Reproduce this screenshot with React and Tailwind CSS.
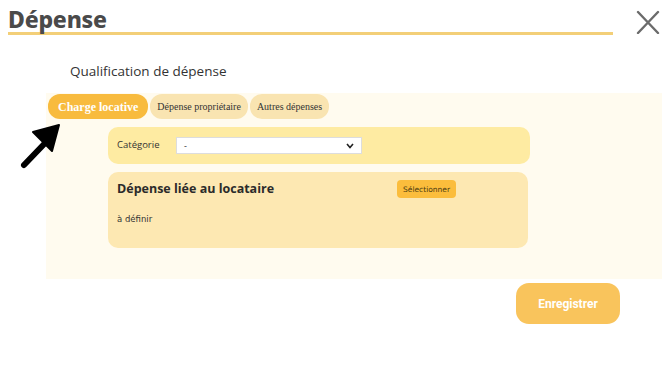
import React from 'react';

const Tab = ({ children, active = false }) => (
  <div
    className={`h-[25px] flex items-center rounded-[12px] ${
      active ? 'px-[10px] bg-[#f8bb3e] text-white font-bold text-[12px]' : 'px-[7px] bg-[#f9e4b1] text-[#333] text-[10px]'
    }`}
    style={{ fontFamily: '"Liberation Serif", serif' }}
  >
    {children}
  </div>
);

const App = () => {
  return (
    <div className="w-[670px] h-[365px] bg-white relative overflow-hidden" style={{ fontFamily: '"Open Sans", sans-serif' }}>
      {/* header */}
      <div className="flex items-start pl-2 pt-[6px]">
        <div className="w-[605px]">
          <h1 className="text-[23px] font-extrabold text-[#4a4a4a] leading-[26px] tracking-[-0.2px]" style={{ fontFamily: '"Noto Sans", sans-serif' }}>
            Dépense
          </h1>
          <div className="h-[3px] bg-[#f3cf78]" />
        </div>
        <svg className="ml-[23px] mt-[4px]" width="24" height="24" viewBox="0 0 24 24">
          <path d="M2 2 L22 23 M22 2 L2 23" stroke="#6b6b6b" strokeWidth="2.4" strokeLinecap="round" />
        </svg>
      </div>

      <p className="ml-[70px] mt-[28px] text-[13.5px] text-[#333] leading-[16px]" style={{ fontFamily: '"Open Sans", sans-serif' }}>
        Qualification de dépense
      </p>

      {/* panel */}
      <div className="ml-[46px] mt-[14px] w-[616px] h-[186px] bg-[#fffbef] pt-[1px]">
        <div className="flex gap-[2px] ml-[2px]">
          <Tab active>Charge locative</Tab>
          <Tab>Dépense propriétaire</Tab>
          <Tab>Autres dépenses</Tab>
        </div>

        <div className="ml-[62px] mt-[8px] w-[422px] h-[37px] rounded-[10px] bg-[#feeba2] flex items-center px-[9px]">
          <span className="text-[9.5px] text-[#333] w-[59px]" style={{ fontFamily: '"Open Sans", sans-serif' }}>Catégorie</span>
          <div className="w-[186px] h-[17px] bg-white border border-[#ddd] flex items-center justify-between px-[7px]">
            <span className="text-[9px] text-[#333]">-</span>
            <svg width="8" height="6" viewBox="0 0 8 6">
              <path d="M1 1 L4 4.5 L7 1" stroke="#222" strokeWidth="1.6" fill="none" />
            </svg>
          </div>
        </div>

        <div className="ml-[62px] mt-[8px] w-[420px] h-[76px] rounded-[10px] bg-[#fde8b2] px-[9px] pt-[8px]">
          <div className="flex items-center">
            <span className="text-[12.5px] font-bold text-[#2b2b2b] w-[280px]" style={{ fontFamily: '"Open Sans", sans-serif' }}>
              Dépense liée au locataire
            </span>
            <div className="h-[18px] px-[6px] rounded-[4px] bg-[#fbbd3c] flex items-center text-[7.5px] text-[#4a3a10]" style={{ fontFamily: '"DejaVu Sans", sans-serif' }}>
              Sélectionner
            </div>
          </div>
          <p className="mt-[14px] text-[8.5px] text-[#333]" style={{ fontFamily: '"DejaVu Sans", sans-serif' }}>à définir</p>
        </div>
      </div>

      <div className="flex justify-end pr-[50px] mt-[4px]">
        <div className="w-[104px] h-[41px] rounded-[13px] bg-[#f9c45c] flex items-center justify-center text-white font-bold text-[12px]" style={{ fontFamily: 'Roboto, sans-serif' }}>
          Enregistrer
        </div>
      </div>

      {/* arrow annotation */}
      <svg className="absolute left-[18px] top-[120px]" width="46" height="50" viewBox="0 0 46 50">
        <path d="M6 45 L30 20" stroke="#000" strokeWidth="6" strokeLinecap="round" />
        <path d="M41 5 L15 12 L34 31 Z" fill="#000" stroke="#000" strokeWidth="2" strokeLinejoin="round" />
      </svg>
    </div>
  );
};

export default App;
